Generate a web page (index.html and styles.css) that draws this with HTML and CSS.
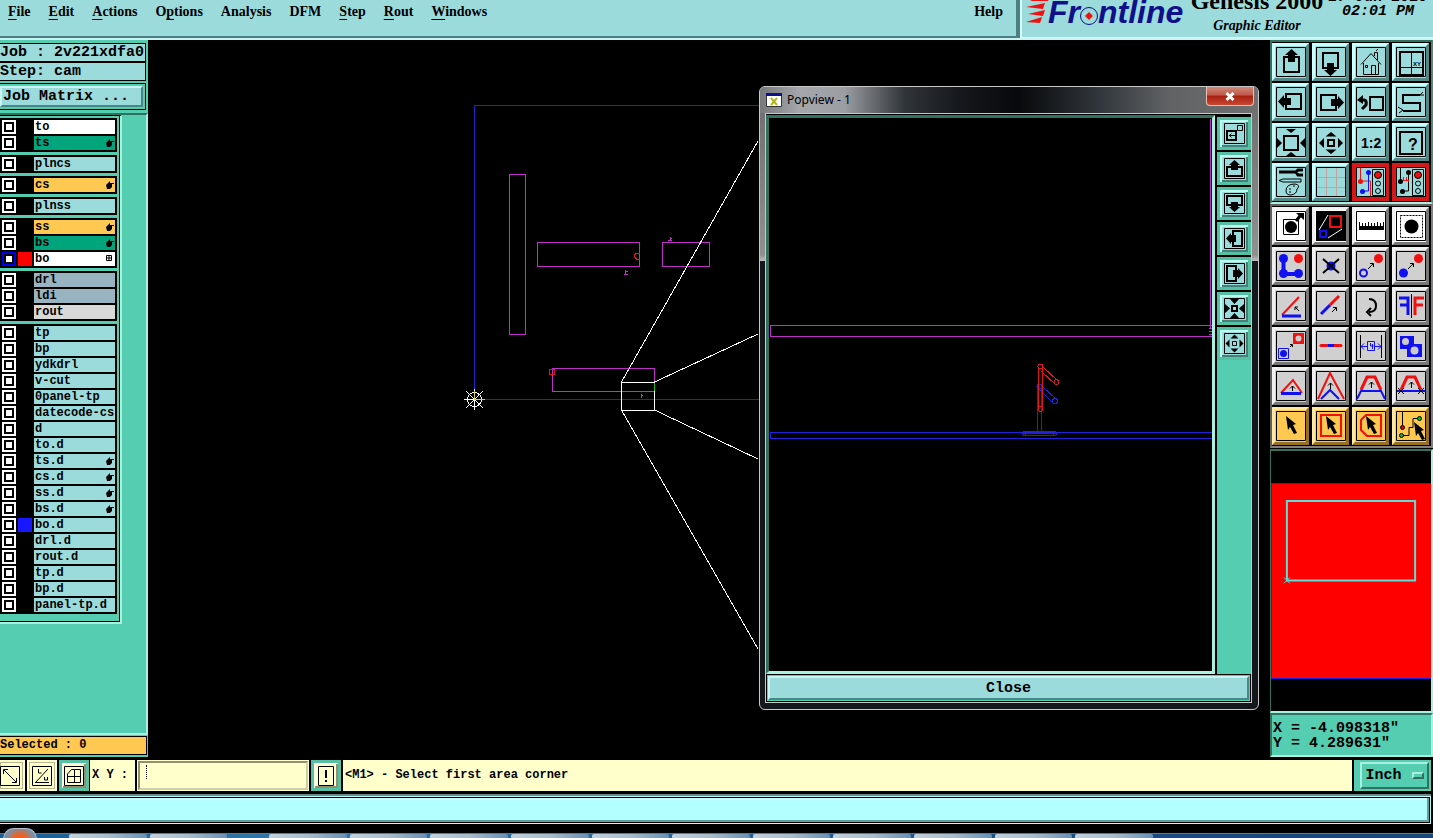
FILE: index.html
```html
<!DOCTYPE html>
<html lang="en">
<head>
    <meta charset="UTF-8">
    <meta name="viewport" content="width=device-width, initial-scale=1.0">
    <title>Genesis 2000 - Graphic Editor</title>
    <link rel="stylesheet" href="styles.css">
</head>
<body>
    <header>
        <nav class="menu">
            <button><u>F</u>ile</button>
            <button><u>E</u>dit</button>
            <button><u>A</u>ctions</button>
            <button>O<u>p</u>tions</button>
            <button>Analysis</button>
            <button>DFM</button>
            <button><u>S</u>tep</button>
            <button><u>R</u>out</button>
            <button><u>W</u>indows</button>
            <button class="help">Help</button>
        </nav>
        <div class="brand">
            <div class="logo">
                <svg class="flames" width="24" height="28" viewBox="0 0 24 28">
                    <path d="M23 0H8l-4 2h18zM0 8l19-4-2 6zM2 15l17-4-2 6zM0 23l16-5-2 6z" fill="#f01010"/>
                </svg>
                <span>Fr</span>
                <svg class="target" width="20" height="22" viewBox="0 0 20 22">
                    <circle cx="10" cy="11" r="8.500" fill="none" stroke="#10108a" stroke-width="1"/>
                    <path d="M10 7l4 4-4 4-4-4z" fill="#f01010"/>
                </svg>
                <span>ntline</span>
            </div>
            <div class="product">
                <strong>Genesis 2000</strong>
                <em>Graphic Editor</em>
            </div>
            <div class="clock">
                <span>27 Jun 2016</span>
                <span>02:01 PM</span>
            </div>
        </div>
    </header>

    <main>
        <aside class="left-panel">
            <div class="job-info">Job : 2v221xdfa0</div>
            <div class="job-info">Step: cam</div>
            <div class="job-matrix"><button>Job Matrix ...</button></div>
            <div class="layer-area">
                <div class="layer-list" id="layer-list"></div>
            </div>
            <div class="selected">Selected : 0</div>
        </aside>

        <section class="workspace">
            <svg class="board">
                <g transform="translate(-148 -40)" fill="none" shape-rendering="crispEdges">
                    <path d="M770 105.500H474.500V399.500H770" stroke="#2222cc"/>
                    <g stroke="#c030c8">
                        <rect x="509.500" y="174.500" width="16" height="160"/>
                        <rect x="537.500" y="242.500" width="102" height="24"/>
                        <rect x="662.500" y="242.500" width="47" height="24"/>
                        <rect x="552.500" y="368.500" width="102" height="23"/>
                        <path d="M625.500 270v5M624 274.500h4M626 271.500h2M670.500 237v4M668 240.500h4M670 238.500h2M641.500 394v4M641 395.500h2"/>
                    </g>
                    <path d="M639.500 253l-3 0-2 2 0 2 2 2h3M549.500 369.500h5v5h-5z" stroke="#e01818"/>
                    <g stroke="#fff">
                        <rect x="621.500" y="382.500" width="33" height="28"/>
                        <path d="M621.500 382L758 141M654.500 382L758 334M621.500 410L758 649M654.500 410L758 459"/>
                        <path d="M464 399.500h21M474.500 389v21M466 391l17 17M483 391l-17 17"/>
                        <circle cx="474.500" cy="399.500" r="7"/>
                    </g>
                    <path d="M654.500 383v8" stroke="#10c010"/>
                    <path d="M474.500 391v8.500h10" stroke="#d8d020"/>
                </g>
            </svg>

            <div class="popview">
                <div class="title-bar">
                    <svg width="16" height="14" viewBox="0 0 16 14">
                        <path fill="#fff" stroke="#333" d="M.5.500h15v13H.5z"/>
                        <path fill="#10108a" d="M0 0h16v3H0z"/>
                        <path d="M5 5l6 7M11 5l-6 7" stroke="#b0b818" stroke-width="2"/>
                    </svg>
                    <h2>Popview - 1</h2>
                    <button class="win-close" aria-label="Close window">
                        <svg width="10" height="9" viewBox="0 0 10 9"><path d="M1.500 1l7 7M8.500 1l-7 7" stroke="#fff" stroke-width="3"/></svg>
                    </button>
                </div>
                <div class="pop-content">
                    <div class="pop-body">
                        <div class="pop-view">
                            <svg>
                                <g transform="translate(-769 -118)" fill="none" shape-rendering="crispEdges">
                                    <path d="M1212 325.500H770.500v11H1212M1210.500 119v210M1209 328h3v6h-3M1209 331h3" stroke="#c030c8"/>
                                    <g stroke="#2222dd">
                                        <path d="M1213 432.500H770.500v6H1213"/>
                                        <path d="M1037.500 386v46M1041.500 386v46M1042 386l15 14M1039 389l14 14"/>
                                        <rect x="1022.500" y="431.500" width="34" height="4" rx="2"/>
                                        <path d="M1025 431v4M1053 431v4M1036 433h7M1023 433h33"/>
                                        <circle cx="1039.500" cy="386.500" r="2.500"/>
                                        <circle cx="1055" cy="401" r="2.500"/>
                                    </g>
                                    <g stroke="#e01818">
                                        <path d="M1038.500 367v42M1042.500 367v42M1043 367l15 14M1041 371l14 13"/>
                                        <circle cx="1040.500" cy="366.500" r="2.500"/>
                                        <circle cx="1056.500" cy="382" r="2.500"/>
                                        <circle cx="1040.500" cy="409" r="2.500"/>
                                    </g>
                                </g>
                            </svg>
                        </div>
                        <div class="pop-tools">
                            <button aria-label="Zoom link"><svg viewBox="0 0 21 21"><path class="ln" d="M.5.500h20v20H.5z"/><path class="ln2" d="M3 8h9v9H3z"/><path class="ln" d="M13.500 2.500h5v5h-5zM12 8l2-2M5 12.500h6M7.500 10.500l-2 2 2 2"/></svg></button>
                            <button aria-label="Pan up"><svg viewBox="0 0 21 21"><use href="#pan"/></svg></button>
                            <button aria-label="Pan down"><svg viewBox="0 0 21 21"><use href="#pan" transform="rotate(180 10.500 10.500)"/></svg></button>
                            <button aria-label="Pan left"><svg viewBox="0 0 21 21"><use href="#pan" transform="rotate(-90 10.500 10.500)"/></svg></button>
                            <button aria-label="Pan right"><svg viewBox="0 0 21 21"><use href="#pan" transform="rotate(90 10.500 10.500)"/></svg></button>
                            <button aria-label="Zoom in"><svg viewBox="0 0 21 21"><path class="ln" d="M.5.500h20v20H.5z"/><path class="ln2" d="M8 8h5v5H8z"/><path d="M6 1h9l-4.500 5zM6 20h9l-4.500-5zM1 6v9l5-4.500zM20 6v9l-5-4.500z"/></svg></button>
                            <button aria-label="Zoom out"><svg viewBox="0 0 21 21"><path class="ln" d="M.5.500h20v20H.5zM8.500 8.500h4v4h-4z"/><path d="M6.500 5.500h8l-4-4zM6.500 15.500h8l-4 4zM5.500 6.500v8l-4-4zM15.500 6.500v8l4-4z"/></svg></button>
                        </div>
                    </div>
                    <div class="pop-footer"><button>Close</button></div>
                </div>
            </div>
        </section>

        <aside class="right-panel">
            <div class="tools view-tools">
                <button aria-label="Up"><svg viewBox="0 0 30 30"><use href="#frame"/><use href="#move"/></svg></button>
                <button aria-label="Down"><svg viewBox="0 0 30 30"><use href="#frame"/><use href="#move" transform="rotate(180 15 15.500)"/></svg></button>
                <button aria-label="Home"><svg viewBox="0 0 30 30"><use href="#frame"/><path class="ln" d="M5 17.500L15 6.500l10 11M7.500 16v11.500h15V16M15.500 27v-8.500h4V27M9.500 18.500h2v2h-2zM18.500 9V5.500h3V13M20 4l2-2"/></svg></button>
                <button aria-label="Coordinates"><svg viewBox="0 0 30 30"><use href="#frame"/><path class="ln2" d="M4 5h23v23H4z"/><path class="ln" d="M15.500 5v23M4 20.500h23"/><text x="17" y="19" font-size="6">XY</text></svg></button>
                <button aria-label="Left"><svg viewBox="0 0 30 30"><use href="#frame"/><use href="#move" transform="rotate(-90 15 15)"/></svg></button>
                <button aria-label="Right"><svg viewBox="0 0 30 30"><use href="#frame"/><use href="#move" transform="rotate(90 15 15)"/></svg></button>
                <button aria-label="Previous"><svg viewBox="0 0 30 30"><use href="#frame"/><path class="ln2" d="M14 10h13v13H14z"/><path d="M4 13h4q3 0 2 5l-4 4" fill="none" stroke="#000" stroke-width="3"/><path d="M1 13l6-5v9z"/></svg></button>
                <button aria-label="Snake"><svg viewBox="0 0 30 30"><use href="#frame"/><path class="ln2" d="M24 8H7v8h17v8H7"/><path class="ln" d="M24 8l3-3M24 8h4M7 23l-4 3M7 23l-5-3"/></svg></button>
                <button aria-label="Zoom in"><svg viewBox="0 0 30 30"><use href="#frame"/><path class="ln2" d="M8 9h14v14H8z"/><path d="M10 2h10l-5 4zM10 29h10l-5-4zM1 11v10l5-5zM29 11v10l-5-5z"/></svg></button>
                <button aria-label="Zoom out"><svg viewBox="0 0 30 30"><use href="#frame"/><path class="ln2" d="M12 13h6v6h-6z"/><path d="M9.500 9.500h11L15 5zM9.500 22.500h11L15 27zM8 11v10l-5-5zM22 11v10l5-5z"/></svg></button>
                <button aria-label="Scale 1:2"><svg viewBox="0 0 30 30"><use href="#frame"/><text x="5" y="21" font-size="14">1:2</text></svg></button>
                <button aria-label="Help"><svg viewBox="0 0 30 30"><use href="#frame"/><path class="ln2" d="M4 5h22v22H4z"/><text x="12" y="23" font-size="16">?</text></svg></button>
                <button aria-label="Settings"><svg viewBox="0 0 30 30"><use href="#frame"/><path d="M3 5h16M27 3h-5l-2 2 2 3h5" fill="none" stroke="#000" stroke-width="3"/><path class="ln" d="M3 13.500l4-1.500h18v3H7zM10 24q0-7 9-7 6 1 2 5 0 5-6 6-5 0-5-4zM13 22h2M17 19h2M13 25h2"/></svg></button>
                <button aria-label="Grid"><svg viewBox="0 0 30 30"><use href="#frame"/><path d="M10.500 1v28M20.500 1v28M1 10.500h28M1 20.500h28" stroke="#c8a0a0"/></svg></button>
                <button class="alert" aria-label="Net check"><svg viewBox="0 0 30 30"><use href="#frame"/><use href="#lights"/><path d="M4.500 1v13h10v15" fill="none" stroke="#f01010"/><path d="M12.500 5v19H7" fill="none" stroke="#1010f0"/><circle cx="4.500" cy="14.500" r="2.500" fill="#f01010"/><circle cx="12.500" cy="5.500" r="2.500" fill="#1010f0"/><circle cx="6.500" cy="24.500" r="2.500" fill="#1010f0"/></svg></button>
                <button class="alert" aria-label="Short check"><svg viewBox="0 0 30 30"><use href="#frame"/><use href="#lights"/><path class="ln" d="M4.500 1v13M12.500 5v19H7"/><path d="M7 13.500h6M7.500 10v4M10.500 10v4" stroke="#f01010"/><circle cx="4.500" cy="14.500" r="2.500"/><circle cx="12.500" cy="5.500" r="2.500"/><circle cx="6.500" cy="24.500" r="2.500"/></svg></button>
            </div>

            <div class="tools edit-tools">
                <button class="white" aria-label="Export feature"><svg viewBox="0 0 30 30"><use href="#frame"/><path class="ln" d="M7.500 8.500h15v15h-15z"/><circle cx="15" cy="16" r="6"/><path d="M20 10l4-5" stroke="#000" stroke-width="3"/><path d="M20 2h8v7z"/></svg></button>
                <button class="white" aria-label="Popview"><svg viewBox="0 0 30 30"><path d="M0 0h30v30H0z"/><path d="M14 5h11v11H14z" fill="none" stroke="#f01010" stroke-width="2"/><path d="M4 20h6v6H4z" fill="none" stroke="#1010f0" stroke-width="2"/><path d="M3 19L12 4M12 27l14-9" stroke="#fff"/></svg></button>
                <button class="white" aria-label="Measure"><svg viewBox="0 0 30 30"><use href="#frame"/><path d="M3 15h25v4H3z"/><path d="M3.500 11v4M6.500 12v3M9.500 12v3M12.500 11v4M15.500 12v3M18.500 12v3M21.500 11v4M24.500 12v3M27.500 11v4" stroke="#000"/></svg></button>
                <button class="white" aria-label="Highlight"><svg viewBox="0 0 30 30"><use href="#frame"/><path class="ln" d="M4.500 4.500h22v22h-22z" stroke-dasharray="2 1"/><circle cx="15.500" cy="15.500" r="7"/></svg></button>
                <button aria-label="Connect"><svg viewBox="0 0 30 30"><use href="#frame"/><path d="M7.500 8v15h15" fill="none" stroke="#1010f0" stroke-width="4"/><g fill="#1010f0"><circle cx="7.500" cy="7.500" r="4.500"/><circle cx="7.500" cy="22.500" r="4.500"/><circle cx="22.500" cy="22.500" r="4.500"/></g><circle cx="22.500" cy="7.500" r="4.500" fill="#f01010"/></svg></button>
                <button aria-label="Delete"><svg viewBox="0 0 30 30"><use href="#frame"/><circle cx="15" cy="15" r="4.500" fill="#1010f0"/><path d="M7 8l16 14M23 8L7 22" stroke="#000" stroke-width="2"/></svg></button>
                <button aria-label="Copy"><svg viewBox="0 0 30 30"><use href="#frame"/><circle cx="7.500" cy="22" r="3.500" fill="none" stroke="#1010f0" stroke-width="2"/><circle cx="22.500" cy="7.500" r="4.500" fill="#f01010"/><path class="ln" d="M12 18l5-5M14 12.500h3.500V16"/></svg></button>
                <button aria-label="Move"><svg viewBox="0 0 30 30"><use href="#frame"/><circle cx="7.500" cy="22" r="4.500" fill="#1010f0"/><circle cx="22.500" cy="7.500" r="4.500" fill="#f01010"/><path class="ln" d="M12 18l5-5M14 12.500h3.500V16"/></svg></button>
                <button aria-label="Rotate line"><svg viewBox="0 0 30 30"><use href="#frame"/><path d="M6 24L23 6" stroke="#f01010" stroke-width="2"/><path d="M6 25h19" stroke="#1010f0" stroke-width="3"/><path class="ln" d="M23 20l-4-4M19 19v-3h3"/></svg></button>
                <button aria-label="Stretch line"><svg viewBox="0 0 30 30"><use href="#frame"/><path d="M5 23l9-9" stroke="#1010f0" stroke-width="3"/><path d="M14 14l9-9" stroke="#f01010" stroke-width="3"/><path class="ln" d="M16 21l4-4M17 16.500h3.500V20"/></svg></button>
                <button aria-label="Rotate"><svg viewBox="0 0 30 30"><use href="#frame"/><path d="M13 8q7 0 7 7 0 6-7 6M15 17l-4 4 4 4" fill="none" stroke="#000" stroke-width="2"/></svg></button>
                <button aria-label="Mirror"><svg viewBox="0 0 30 30"><use href="#frame"/><path class="ln" d="M15.500 3v24"/><path d="M3 7h9v17M4 14h8" fill="none" stroke="#1010f0" stroke-width="3"/><path d="M28 7h-9v17M27 14h-8" fill="none" stroke="#f01010" stroke-width="3"/></svg></button>
                <button aria-label="Replace"><svg viewBox="0 0 30 30"><use href="#frame"/><path d="M17 2h11v11H17z" fill="#f01010"/><circle cx="22.500" cy="7.500" r="3" fill="#ccc"/><path d="M2.500 17.500h10v10h-10z" fill="none" stroke="#1010f0"/><circle cx="7.500" cy="22.500" r="3.500" fill="#1010f0"/><path class="ln" d="M14 16l2-2M14 13.500h2.500V16"/></svg></button>
                <button aria-label="Break line"><svg viewBox="0 0 30 30"><use href="#frame"/><path d="M5 14.500h20" stroke="#f01010" stroke-width="3" stroke-linecap="round"/><path d="M12 14.500h6" stroke="#1010f0" stroke-width="3"/></svg></button>
                <button aria-label="Spacing"><svg viewBox="0 0 30 30"><use href="#frame"/><path class="ln" d="M4.500 4v23M25.500 4v23"/><path d="M5 15.500h6M25 15.500h-6M8 12.500l-3 3 3 3M22 12.500l3 3-3 3M11.500 10.500h7v9h-7zM14.500 12v3h3M16.500 13v5" fill="none" stroke="#1010f0"/></svg></button>
                <button aria-label="Merge"><svg viewBox="0 0 30 30"><use href="#frame"/><path d="M4 5h14v8h8v13H11v-8H4z" fill="#1010f0"/><g fill="#ccc"><circle cx="9.500" cy="10.500" r="3.500"/><circle cx="18.500" cy="19.500" r="4"/></g></svg></button>
                <button aria-label="Triangle"><svg viewBox="0 0 30 30"><use href="#frame"/><path d="M5 22L17 9l9 13" fill="none" stroke="#f01010" stroke-width="2"/><path d="M5 22.500h20" stroke="#1010f0" stroke-width="3"/><path class="ln" d="M16.500 20v-5M14 17.500l2.500-2.500 2.500 2.500"/></svg></button>
                <button aria-label="Peak"><svg viewBox="0 0 30 30"><use href="#frame"/><path d="M2 28L14 2l14 26" fill="none" stroke="#f01010" stroke-width="2"/><path d="M5 28l9-9 9 9" fill="none" stroke="#1010f0" stroke-width="2"/><path class="ln" d="M14.500 18v-6M12 14.500l2.500-2.500 2.500 2.500"/></svg></button>
                <button aria-label="Trapezoid"><svg viewBox="0 0 30 30"><use href="#frame"/><path d="M5 19l6-13h8l6 13" fill="none" stroke="#f01010" stroke-width="3"/><path d="M1 28l4-8h20l4 8" fill="none" stroke="#1010f0" stroke-width="2"/><path class="ln" d="M15.500 17v-6M13 13.500l2.500-2.500 2.500 2.500"/></svg></button>
                <button aria-label="Trim"><svg viewBox="0 0 30 30"><use href="#frame"/><path d="M5 19l6-13h8l6 13" fill="none" stroke="#f01010" stroke-width="3"/><path d="M1 20h28" stroke="#1010f0" stroke-width="2"/><path class="ln" d="M15.500 17v-6M13 13.500l2.500-2.500 2.500 2.500M2 17l6 6M8 17l-6 6M22 17l6 6M28 17l-6 6"/></svg></button>
                <button class="orange" aria-label="Select"><svg viewBox="0 0 30 30"><use href="#frame"/><use href="#cursor"/></svg></button>
                <button class="orange" aria-label="Select box"><svg viewBox="0 0 30 30"><use href="#frame"/><path d="M5 4h20v21H5z" fill="none" stroke="#f01010" stroke-width="2"/><use href="#cursor"/></svg></button>
                <button class="orange" aria-label="Select polygon"><svg viewBox="0 0 30 30"><use href="#frame"/><path d="M10 4h15v21H11l-6-6V9z" fill="none" stroke="#f01010" stroke-width="2"/><use href="#cursor"/></svg></button>
                <button class="orange" aria-label="Select net"><svg viewBox="0 0 30 30"><use href="#frame"/><path class="ln" d="M6.500 1v14M6 24.500h7v-8h4v-9h6"/><circle cx="6.500" cy="16.500" r="2" fill="#c01010" stroke="#000"/><circle cx="5.500" cy="24.500" r="2" fill="#10c010" stroke="#000"/><circle cx="23.500" cy="7.500" r="2" fill="#10c010" stroke="#000"/><use href="#cursor" transform="translate(8 6)"/></svg></button>
            </div>

            <div class="navigator">
                <div class="overview">
                    <svg viewBox="0 0 160 195">
                        <path d="M15 17h129v80H15z" fill="none" stroke="#58e0d8" stroke-width="2"/>
                        <path d="M12 94l6 6M18 94l-6 6" stroke="#40e8e0"/>
                    </svg>
                </div>
            </div>
            <div class="coords">
                <span>X = -4.098318"</span>
                <span>Y = 4.289631"</span>
            </div>
        </aside>
    </main>

    <div class="status-bar">
        <button class="snap first" aria-label="Snap"><svg viewBox="0 0 20 20"><path class="ln" d="M.5.500h19v19H.5zM4 4l12 12M3.500 8V3.500H8M16.500 12v4.500H12"/></svg></button>
        <button class="snap" aria-label="Angle"><svg viewBox="0 0 20 20"><path class="ln" d="M.5.500h19v19H.5zM3 17L16 3M6.500 3v4h3M3 16.500h14M12.500 11v3h3v-3"/></svg></button>
        <button class="snap teal" aria-label="Grid snap"><svg viewBox="0 0 20 20"><path class="ln" d="M.5.500h19v19H.5zM3.500 8l4-4.500h9v13h-13zM10.500 3v13M3 10.500h13"/></svg></button>
        <label for="xy">X Y :</label>
        <div class="xy-cell"><input type="text" id="xy"><i class="caret"></i></div>
        <button class="snap teal" aria-label="Message"><svg viewBox="0 0 20 20"><path class="ln" d="M2.500.500h15v19h-15z"/><path d="M10 4v8M10 14v2" stroke="#000" stroke-width="2"/></svg></button>
        <div class="message">&lt;M1&gt; - Select first area corner</div>
        <div class="unit-cell"><button class="unit">Inch <i></i></button></div>
    </div>

    <div class="prompt-line"><div></div></div>

    <footer class="taskbar">
        <span class="orb"></span>
        <div class="tasks">
            <i></i><i></i><b></b><i></i><i></i><i></i><i></i><i></i><i></i><i></i><i></i><i></i><i></i><i></i>
        </div>
    </footer>

    <svg class="defs" width="0" height="0">
        <defs>
            <path id="frame" class="ln" d="M.5.500h29v29H.5z"/>
            <g id="move">
                <path class="ln2" d="M8 10h15v15H8z"/>
                <path d="M15.500 2l6.500 6h-3v7h-7V8H9z"/>
            </g>
            <g id="pan">
                <path class="ln" d="M.5.500h20v20H.5z"/>
                <path class="ln2" d="M7 9H3v9h15V9h-4"/>
                <path d="M10.500 2l5.500 5h-2v5H7V7H5z"/>
            </g>
            <g id="lights">
                <path class="ln" d="M16.500 2.500h11v26h-11z"/>
                <circle cx="22" cy="8" r="3.500" fill="#f01010" stroke="#000"/>
                <circle cx="22" cy="16.500" r="2.500" class="ln"/>
                <circle cx="22" cy="24" r="2.500" class="ln"/>
            </g>
            <path id="cursor" d="M10 5l10 8-3 1 4 8-3 1-4-7-2 3z"/>
            <path id="hand" d="M0 4l3-3 1-1v2h4v1H6v3L4 8H1z"/>
            <path id="cross" d="M.5.500h5v5h-5zM3 0v6M0 3h6" fill="none" stroke="#000"/>
        </defs>
    </svg>

    <script>
        // name, row style, marker, colour swatch
        const groups = [
            [['to', 'white'], ['ts', 'green', 'hand']],
            [['plncs']],
            [['cs', 'orange', 'hand']],
            [['plnss']],
            [['ss', 'orange', 'hand'], ['bs', 'green', 'hand'], ['bo', 'white', 'cross', 'red']],
            [['drl', 'slate'], ['ldi', 'slate'], ['rout', 'grey']],
            [['tp'], ['bp'], ['ydkdrl'], ['v-cut'], ['0panel-tp'], ['datecode-cs'], ['d'], ['to.d'],
             ['ts.d', '', 'hand'], ['cs.d', '', 'hand'], ['ss.d', '', 'hand'], ['bs.d', '', 'hand'],
             ['bo.d', '', '', 'blue'], ['drl.d'], ['rout.d'], ['tp.d'], ['bp.d'], ['panel-tp.d']]
        ];

        document.getElementById('layer-list').innerHTML = groups.map(group => `
            <div class="layer-group">
                ${group.map(([name, style = '', mark = '', swatch = '']) => `
                    <label class="layer">
                        <input type="checkbox" class="${swatch === 'red' ? 'work' : ''}">
                        <span class="swatch ${swatch}"></span>
                        <span class="name ${style}">${name}${mark ? `<svg width="8" height="8"><use href="#${mark}"/></svg>` : ''}</span>
                    </label>`).join('')}
            </div>`).join('');
    </script>
</body>
</html>
```

FILE: styles.css
```css
* {
    box-sizing: border-box;
}

body {
    margin: 0;
    min-height: 100vh;
    display: flex;
    flex-direction: column;
    overflow: hidden;
    background-color: #000;
    color: #000;
    font-family: 'Liberation Mono', monospace;
    font-weight: bold;
    font-size: 12px;
}

button {
    font: inherit;
    color: inherit;
    padding: 0;
    border: none;
    background: none;
    display: flex;
    align-items: center;
    justify-content: center;
}

svg {
    display: block;
    flex-shrink: 0;
}

svg text {
    font-family: 'Liberation Sans', sans-serif;
}

.ln {
    fill: none;
    stroke: #000;
    stroke-width: 1;
}

.ln2 {
    fill: none;
    stroke: #000;
    stroke-width: 2;
}

.defs {
    position: absolute;
}

/* header */
header {
    display: flex;
    height: 40px;
    background-color: #9cdbdb;
    border-bottom: 2px solid #c8f4f4;
    font-family: 'Liberation Serif', serif;
}

.menu {
    flex: 1;
    display: flex;
    align-items: flex-start;
    gap: 18px;
    padding: 2px 13px 0 8px;
    border-right: 2px solid #4c8080;
    border-bottom: 2px solid #4c8080;
    font-size: 14px;
    line-height: 19px;
}

.menu button {
    display: block;
}

.menu u {
    text-underline-offset: 3px;
    text-decoration-thickness: 1px;
}

.menu .help {
    margin-left: auto;
}

.brand {
    display: flex;
    width: 415px;
    padding-left: 6px;
    overflow: hidden;
    border-left: 2px solid #4c8080;
    box-shadow: inset 2px -1px #d8ffff;
}

.logo {
    display: flex;
    align-items: flex-end;
    width: 164px;
    height: 27px;
    color: #10108a;
    font-family: 'Liberation Sans', sans-serif;
    font-style: italic;
    font-size: 32px;
    line-height: 30px;
}

.logo .flames {
    margin-right: -2px;
}

.logo .target {
    margin: 0 -1px;
}

.product {
    display: flex;
    flex-direction: column;
    align-items: center;
    justify-content: flex-end;
    gap: 5px;
    width: 134px;
    height: 34px;
    white-space: nowrap;
}

.product strong {
    font-size: 24px;
    line-height: 24px;
}

.product em {
    font-size: 14px;
    line-height: 16px;
}

.clock {
    display: flex;
    flex-direction: column;
    align-items: center;
    justify-content: flex-end;
    width: 108px;
    height: 19px;
    font-family: 'Liberation Mono', monospace;
    font-style: italic;
    font-size: 15px;
    line-height: 14px;
    white-space: nowrap;
}

main {
    flex: 1;
    display: flex;
}

/* layers */
.left-panel {
    width: 148px;
    display: flex;
    flex-direction: column;
    padding-top: 3px;
    background-color: #55cdb0;
    border-bottom: 1px solid #000;
}

.job-info {
    height: 19px;
    margin-right: 2px;
    border: 1px solid #000;
    border-left: none;
    background-color: #9cdbdb;
    font-size: 15px;
    line-height: 17px;
    white-space: nowrap;
}

.job-matrix {
    margin: 2px 2px 3px 0;
    padding: 2px;
    padding-left: 0;
    border: 1px solid #000;
    border-left: none;
}

.job-matrix button {
    width: 100%;
    height: 21px;
    justify-content: flex-start;
    padding-left: 1px;
    background-color: #9cdbdb;
    border: 2px solid;
    border-color: #c8f4f4 #458888 #458888 #c8f4f4;
    font-size: 15px;
}

.layer-area {
    flex: 1;
    border-top: 2px solid #2f7060;
    border-right: 2px solid #a8f0e0;
    border-bottom: 2px solid #a8f0e0;
}

.layer-list {
    width: 122px;
    display: flex;
    flex-direction: column;
    gap: 3px;
    padding: 2px 3px 8px 0;
    border-top: 1px solid #000;
    border-right: 2px solid #a8f0e0;
    border-bottom: 2px solid #a8f0e0;
    box-shadow: inset -1px -1px #000;
}

.layer-group {
    width: 117px;
    display: flex;
    flex-direction: column;
    gap: 2px;
    padding: 2px;
    background-color: #000;
}

.layer {
    display: grid;
    grid-template-columns: 14px 14px 1fr;
    column-gap: 2px;
    height: 14px;
}

.layer input {
    appearance: none;
    width: 14px;
    height: 14px;
    margin: 0;
    background-color: #fff;
    border: 2px solid #fff;
    box-shadow: inset 0 0 0 2px #000;
}

.layer .work {
    border-color: #0000e0;
}

.name {
    display: flex;
    align-items: center;
    justify-content: space-between;
    padding: 0 1px;
    background-color: #9cdbdb;
    line-height: 14px;
    white-space: nowrap;
}

.white {
    background-color: #fff;
}

.green {
    background-color: #00a57c;
}

.orange {
    background-color: #ffc850;
}

.slate {
    background-color: #98b4c0;
}

.grey {
    background-color: #d8d8d8;
}

.red {
    background-color: #f00;
}

.blue {
    background-color: #1818ff;
}

.selected {
    height: 19px;
    margin: 1px 1px 2px 0;
    border: 1px solid #000;
    border-left: none;
    background-color: #ffc850;
    line-height: 17px;
}

/* drawing area */
.workspace {
    position: relative;
    flex: 1;
    overflow: hidden;
}

.board {
    position: absolute;
    width: 100%;
    height: 100%;
}

.popview {
    position: absolute;
    top: 46px;
    right: 11px;
    width: 500px;
    height: 624px;
    display: flex;
    flex-direction: column;
    padding: 0 6px 6px 5px;
    border: 1px solid #c8c8c8;
    border-radius: 6px;
    background: linear-gradient(#6c6c6c, #909090 27%, #c0c0c0 28%, #14181c 28%);
}

.title-bar {
    display: flex;
    align-items: flex-start;
    height: 26px;
    margin: 0 -6px 0 -5px;
    padding: 6px 4px 0 6px;
    border-radius: 5px 5px 0 0;
    background: linear-gradient(90deg, #77797c, #a4a7ab 8%, #9a9da2 17%, #30353a 29%, #15181c 40%, #08090b 52%, #30363b 68%, #606264 82%, #707070);
}

.title-bar h2 {
    margin: 0 auto 0 5px;
    font: 12px/14px 'Noto Sans', sans-serif;
}

.win-close {
    width: 48px;
    height: 19px;
    margin-top: -6px;
    border: 1px solid #e8c0b8;
    border-top: none;
    border-radius: 0 0 4px 4px;
    background: linear-gradient(#d08878, #c05848 45%, #a82010 50%, #c84830);
}

.pop-content {
    flex: 1;
    display: flex;
    flex-direction: column;
    border: 1px solid #c8c8c8;
    background-color: #000;
}

.pop-body {
    flex: 1;
    display: flex;
    gap: 2px;
    margin-top: 1px;
}

.pop-view {
    position: relative;
    flex: 1;
    border: 3px solid;
    border-color: #347060 #a8f0e0 #a8f0e0 #347060;
}

.pop-view svg {
    position: absolute;
    width: 100%;
    height: 100%;
}

.pop-tools {
    display: flex;
    flex-direction: column;
    gap: 2px;
    width: 34px;
    padding-top: 2px;
    background: linear-gradient(#000 245px, #55cdb0 245px);
}

.pop-tools button {
    height: 33px;
    background-color: #9cdbdb;
    border: 3px solid #55c0a4;
    box-shadow: inset 2px 2px #b8fff0, inset -2px -2px #458078;
}

.pop-tools svg {
    width: 21px;
    height: 21px;
}

.pop-footer {
    margin: 1px;
    padding: 1px;
    background-color: #55cdb0;
}

.pop-footer button {
    width: 100%;
    height: 24px;
    background-color: #9cdbdb;
    border: 2px solid;
    border-color: #c8f4f4 #458888 #458888 #c8f4f4;
    font-size: 15px;
}

/* tool palette */
.right-panel {
    width: 163px;
    display: flex;
    flex-direction: column;
}

.tools {
    display: grid;
    grid-template-columns: repeat(4, 37px);
    gap: 2px 3px;
    border: 2px solid #347060;
    padding: 1px 0 1px 0;
}

.tools button {
    height: 38px;
    border: 3px solid;
}

.tools svg {
    width: 30px;
    height: 30px;
}

.view-tools {
    border-bottom-color: #a8f0e0;
    border-right-color: #508878;
}

.view-tools button {
    background-color: #9cdbdb;
    border-color: #c8ffff #508888 #508888 #c8ffff;
}

.view-tools .alert {
    border-color: #d81818;
    box-shadow: inset 0 0 0 1px #d81818;
}

.edit-tools {
    border-color: #606060 #808080 #808080 #606060;
}

.edit-tools button {
    background-color: #d0d0d0;
    border-color: #f0f0f0 #787878 #787878 #f0f0f0;
}

.edit-tools .white {
    background-color: #fff;
}

.edit-tools .orange {
    background-color: #ffc850;
    border-color: #ffe8a0 #987020 #987020 #ffe8a0;
}

.navigator {
    flex: 1;
    display: flex;
    align-items: center;
    margin-top: 1px;
    border: 2px solid #347060;
    border-width: 2px 2px 2px 1px;
    border-right-color: #a8f0e0;
    border-bottom-color: #a8f0e0;
}

.overview {
    width: 100%;
    background-color: #f00;
    border: 1px solid #2020e0;
    border-right: none;
}

.coords {
    height: 44px;
    display: flex;
    flex-direction: column;
    justify-content: center;
    padding: 2px 0 0 1px;
    margin-bottom: 1px;
    background-color: #55cdb0;
    border: 2px solid;
    border-color: #347060 #a8f0e0 #a8f0e0 #347060;
    font-size: 15px;
    line-height: 15px;
}

/* bottom rows */
.status-bar {
    height: 34px;
    display: flex;
    gap: 2px;
    padding: 2px 2px 1px 0;
}

.snap {
    width: 30px;
    background-color: #ffffcc;
    border: 2px solid #ffffcc;
    box-shadow: inset 1px 1px #b8b890, inset -1px -1px #b8b890;
}

.snap svg {
    width: 20px;
    height: 20px;
}

.snap.first {
    width: 25px;
    justify-content: flex-start;
    border-left: none;
}

.snap.teal {
    border: 3px solid #55c0a4;
    box-shadow: inset 1px 1px #ffffe8, inset -2px -2px #909070;
}

.status-bar label {
    width: 45px;
    padding-left: 2px;
    margin-left: -1px;
    background-color: #ffffcc;
    line-height: 31px;
    white-space: nowrap;
}

.xy-cell {
    position: relative;
    width: 172px;
    padding: 1px;
    background-color: #ffffcc;
}

.xy-cell input {
    width: 100%;
    height: 100%;
    padding: 0 8px;
    border: 2px solid;
    border-color: #909070 #d0d0a8 #d0d0a8 #909070;
    outline: none;
    background-color: #ffffcc;
    font: inherit;
}

.caret {
    position: absolute;
    top: 5px;
    left: 9px;
    height: 14px;
    border-left: 1px dotted #000;
}

.message {
    flex: 1;
    padding-left: 2px;
    background-color: #ffffcc;
    line-height: 31px;
}

.unit-cell {
    width: 77px;
    padding: 2px 2px 2px 6px;
    background-color: #55cdb0;
}

.unit {
    width: 100%;
    height: 27px;
    gap: 10px;
    border: 2px solid;
    border-color: #a8f0e0 #347060 #347060 #a8f0e0;
    font-size: 15px;
}

.unit i {
    width: 12px;
    height: 7px;
    border: 2px solid;
    border-color: #a8f0e0 #347060 #347060 #a8f0e0;
}

.prompt-line {
    margin: 2px 2px 9px 0;
    padding: 1px 1px 1px 0;
    height: 30px;
    background-color: #b3ffff;
    border-top: 2px solid #708888;
}

.prompt-line div {
    height: 26px;
    border: 1px solid #000;
    border-left: none;
    box-shadow: inset -2px -2px #60a0a0, inset 0 2px #d0ffff;
}

.taskbar {
    position: relative;
    height: 5px;
    padding-left: 69px;
    background: linear-gradient(90deg, #1c5c94, #3078a8 20%, #1a4a80 80%, #184878);
    border-top: 1px solid #607890;
}

.orb {
    position: absolute;
    top: -6px;
    left: 3px;
    width: 34px;
    height: 11px;
    border-radius: 17px 17px 0 0;
    border: 1px solid #b0c0d0;
    border-bottom: none;
    background: radial-gradient(circle at 50% 120%, #f06020 30%, #7890a8 70%);
}

.tasks {
    display: flex;
    gap: 3px;
    height: 4px;
    max-width: 1084px;
}

.tasks i {
    flex: 1;
    border-radius: 2px 2px 0 0;
    background: linear-gradient(90deg, #c0d0dc, #a8bccc 50%, #6890b4);
}

.tasks b {
    width: 36px;
}
```
